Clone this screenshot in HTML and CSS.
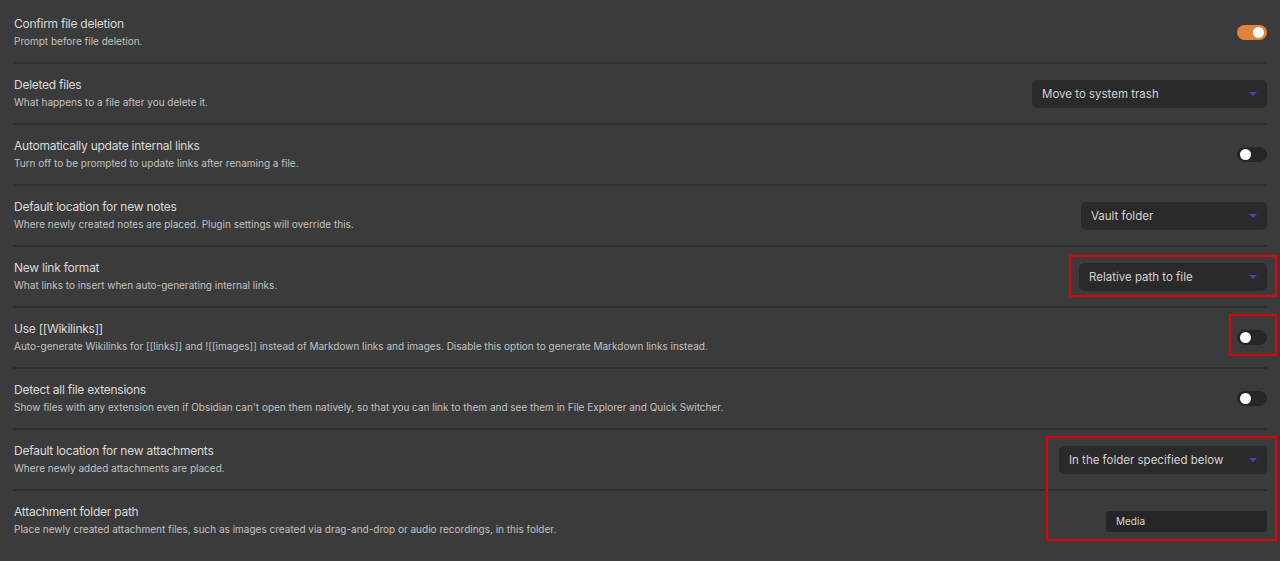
FILE: index.html
```html
<!DOCTYPE html>
<html>
<head>
<meta charset="utf-8">
<link rel="stylesheet" href="styles.css">
</head>
<body>
<div class="settings">
  <div class="row">
    <div class="info"><div class="name">Confirm file deletion</div><div class="desc">Prompt before file deletion.</div></div>
    <div class="control"><div class="toggle on"><span class="knob"></span></div></div>
  </div>
  <div class="row">
    <div class="info"><div class="name">Deleted files</div><div class="desc">What happens to a file after you delete it.</div></div>
    <div class="control"><div class="select w235"><span>Move to system trash</span><span class="arrow"></span></div></div>
  </div>
  <div class="row">
    <div class="info"><div class="name">Automatically update internal links</div><div class="desc">Turn off to be prompted to update links after renaming a file.</div></div>
    <div class="control"><div class="toggle"><span class="knob"></span></div></div>
  </div>
  <div class="row">
    <div class="info"><div class="name">Default location for new notes</div><div class="desc">Where newly created notes are placed. Plugin settings will override this.</div></div>
    <div class="control"><div class="select w186"><span>Vault folder</span><span class="arrow"></span></div></div>
  </div>
  <div class="row">
    <div class="info"><div class="name">New link format</div><div class="desc">What links to insert when auto-generating internal links.</div></div>
    <div class="control"><div class="select w188"><span>Relative path to file</span><span class="arrow"></span></div><div class="mark mark-link"></div></div>
  </div>
  <div class="row">
    <div class="info"><div class="name">Use [[Wikilinks]]</div><div class="desc">Auto-generate Wikilinks for [[links]] and ![[images]] instead of Markdown links and images. Disable this option to generate Markdown links instead.</div></div>
    <div class="control"><div class="toggle"><span class="knob"></span></div><div class="mark mark-wiki"></div></div>
  </div>
  <div class="row">
    <div class="info"><div class="name">Detect all file extensions</div><div class="desc">Show files with any extension even if Obsidian can't open them natively, so that you can link to them and see them in File Explorer and Quick Switcher.</div></div>
    <div class="control"><div class="toggle"><span class="knob"></span></div></div>
  </div>
  <div class="row">
    <div class="info"><div class="name">Default location for new attachments</div><div class="desc">Where newly added attachments are placed.</div></div>
    <div class="control"><div class="select w208"><span>In the folder specified below</span><span class="arrow"></span></div><div class="mark mark-attach"></div></div>
  </div>
  <div class="row last">
    <div class="info"><div class="name">Attachment folder path</div><div class="desc">Place newly created attachment files, such as images created via drag-and-drop or audio recordings, in this folder.</div></div>
    <div class="control"><div class="input">Media</div></div>
  </div>
</div>
</body>
</html>
```
FILE: styles.css
```css
html, body {
  margin: 0;
  padding: 0;
  background: #3b3b3b;
  height: 100%;
}
body {
  font-family: Inter, "Noto Sans", sans-serif;
  color: #dadada;
  overflow: hidden;
}
.settings {
  padding: 3px 13px 0 13px;
}
.row {
  display: flex;
  align-items: center;
  justify-content: space-between;
  height: 59px;
  border-bottom: 2px solid #2f2f2f;
  padding-left: 1px;
}
.row.last {
  border-bottom: none;
}
.info {
  display: flex;
  flex-direction: column;
  gap: 3px;
  margin-bottom: 1px;
}
.name {
  font-size: 12px;
  letter-spacing: -0.25px;
  line-height: 15px;
  color: #dadada;
}
.desc {
  font-size: 10px;
  line-height: 14px;
  color: #c2c2c2;
}
.control {
  position: relative;
  display: flex;
  align-items: center;
  justify-content: flex-end;
}
.toggle {
  width: 30px;
  height: 15px;
  border-radius: 8px;
  background: #262626;
  position: relative;
}
.toggle.on {
  background: #e0843a;
}
.knob {
  position: absolute;
  top: 2px;
  left: 3px;
  width: 11px;
  height: 11px;
  border-radius: 50%;
  background: #ffffff;
}
.toggle.on .knob {
  left: 16px;
}
.select {
  height: 28px;
  box-sizing: border-box;
  border-radius: 5px;
  background: #2a2a2a;
  display: flex;
  align-items: center;
  justify-content: space-between;
  padding: 0 10px 0 10px;
  font-size: 11.5px;
  color: #d4d4d4;
}
.w235 { width: 235px; }
.w186 { width: 186px; }
.w188 { width: 188px; }
.w208 { width: 208px; }
.arrow {
  width: 0;
  height: 0;
  border-left: 4px solid transparent;
  border-right: 4px solid transparent;
  border-top: 4px solid #5340b0;
  margin-top: 1px;
}
.input {
  width: 161px;
  height: 21px;
  box-sizing: border-box;
  border-radius: 3px;
  background: #262626;
  font-size: 10px;
  color: #d4d4d4;
  padding: 0 10px;
  display: flex;
  align-items: center;
  margin-top: 1px;
}
.mark {
  position: absolute;
  border: 2px solid #e0000e;
  box-sizing: border-box;
  pointer-events: none;
}
.mark-link {
  right: -10px;
  top: -8px;
  width: 208px;
  height: 42px;
}
.mark-wiki {
  right: -10px;
  top: -16px;
  width: 48px;
  height: 42px;
}
.mark-attach {
  right: -10px;
  top: -10px;
  width: 231px;
  height: 105px;
}
.row.last .control {
  align-self: center;
}
```
